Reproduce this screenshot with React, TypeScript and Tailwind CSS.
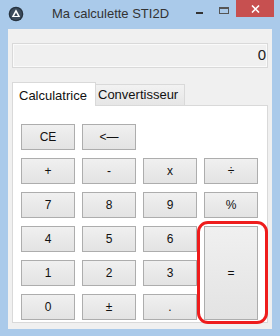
const keys: Array<string | null> = [
  'CE', '<—', null, null,
  '+', '-', 'x', '÷',
  '7', '8', '9', '%',
  '4', '5', '6',
  '1', '2', '3',
  '0', '±', '.',
]

function KeyButton({ label, className = '' }: { label: string; className?: string }) {
  return (
    <button
      className={`flex items-center justify-center border border-[#adadad] bg-gradient-to-b from-[#f0f0f0] to-[#e3e3e3] text-[12px] text-[#111] ${className}`}
      type="button"
    >
      {label}
    </button>
  )
}

function TitleBar() {
  return (
    <div className="flex h-[29px] items-start">
      <svg className="ml-[8px] mt-[6px]" width="16" height="16" viewBox="0 0 16 16">
        <circle cx="8" cy="8" r="7.3" fill="#26323f" />
        <circle cx="8" cy="8" r="6" fill="#3b4a5a" />
        <path d="M8 3.2 L12.2 11 L3.8 11 Z" fill="#ffffff" />
        <path d="M8 6.6 L9.9 10 L6.1 10 Z" fill="#3b4a5a" />
      </svg>
      <span className="ml-[28px] mt-[6px] text-[13px] leading-[16px] text-[#333]">
        Ma calculette STI2D
      </span>
      <div className="ml-auto flex items-start">
        <div className="mt-[12px] h-[2px] w-[7px] bg-[#333]" />
        <div className="ml-[16px] mt-[7px] h-[7px] w-[10px] border border-t-2 border-[#555]" />
        <div className="ml-[7px] mr-[6px] flex h-[17px] w-[38px] items-center justify-center bg-[#c75050]">
          <svg width="9" height="8" viewBox="0 0 9 8">
            <path d="M1 0.5 L8 7.5 M8 0.5 L1 7.5" stroke="#fff" strokeWidth="1.6" />
          </svg>
        </div>
      </div>
    </div>
  )
}

export default function App() {
  return (
    <main
      className="relative flex h-[336px] w-[280px] flex-col overflow-hidden bg-[#aacaea]"
      style={{ fontFamily: '"Liberation Sans", Arial, sans-serif' }}
    >
      <TitleBar />

      <div className="mx-[8px] flex h-[300px] flex-col bg-[#f0f0f0] px-[4px] pb-[6px] pt-[14px]">
        <div className="flex h-[25px] items-center justify-end border border-[#d9d9d9] pr-[1px] text-[15px] text-[#222] shadow-[inset_0_0_0_1px_#fafafa]">
          0
        </div>

        <div className="mt-[14px] flex h-[23px] items-end">
          <div className="relative z-10 -mb-px flex h-[24px] w-[84px] items-start border border-b-0 border-[#d9d9d9] bg-white pl-[6px] pt-[3px] text-[13px] text-[#111]">
            Calculatrice
          </div>
          <div className="flex h-[21px] w-[89px] items-center border border-l-0 border-b-0 border-[#d9d9d9] bg-gradient-to-b from-[#f2f2f2] to-[#e6e6e6] pl-[2px] text-[13px] text-[#111]">
            Convertisseur
          </div>
        </div>

        <div className="flex-1 border border-[#d9d9d9] bg-white pl-[8px] pt-[18px]">
          <div className="grid grid-cols-[54px_54px_54px_54px] grid-rows-[26px_26px_26px_26px_26px_26px] gap-x-[7px] gap-y-[8px]">
            <KeyButton className="col-start-4 row-span-3 row-start-4" label="=" />
            {keys.map((label, i) =>
              label ? <KeyButton key={i} label={label} /> : <div key={i} />,
            )}
          </div>
        </div>
      </div>

      <div className="absolute left-[197px] top-[221px] h-[103px] w-[71px] rounded-[11px] border-[3px] border-[#ee1c1c]" />
    </main>
  )
}
